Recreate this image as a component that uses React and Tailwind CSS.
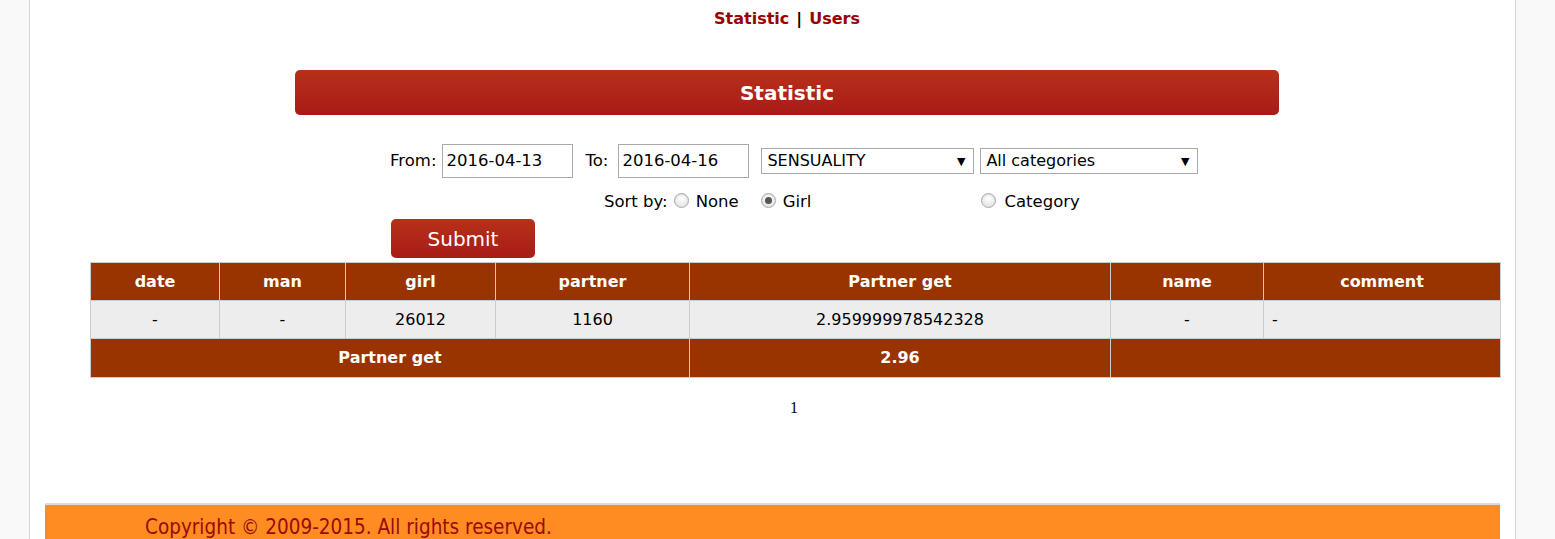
import React from "react";

function Radio({ checked }) {
  return (
    <span className="relative inline-block w-[15px] h-[15px] rounded-full border border-[#a8a8a8] bg-[radial-gradient(circle_at_50%_35%,#ffffff,#dcdcdc)] shadow-[inset_0_1px_1px_rgba(0,0,0,0.08)]">
      {checked && (
        <span className="absolute left-[3px] top-[3px] w-[7px] h-[7px] rounded-full bg-[#555]" />
      )}
    </span>
  );
}

function Select({ width, label }) {
  return (
    <div
      className={`flex items-center justify-between h-[26px] border border-[#a9a9a9] bg-white pl-[5px] pr-[8px] text-[16px] text-black ${width}`}
    >
      <span>{label}</span>
      <span className="text-[11px] leading-none">▼</span>
    </div>
  );
}

export default function App() {
  const cols = ["date", "man", "girl", "partner", "Partner get", "name", "comment"];
  const widths = [129, 126, 150, 194, 421, 153, 237];
  const row = ["-", "-", "26012", "1160", "2.959999978542328", "-", "-"];
  return (
    <div className="flex min-h-[539px] font-['DejaVu_Sans',sans-serif] text-[16px] text-black">
      <div className="w-[29px] bg-[#f9f9f9]" />
      <div className="w-[1487px] border-x border-[#d6d6d6] bg-white flex flex-col">
        {/* nav */}
        <div className="ml-[265px] w-[984px] pt-[9px] text-center font-bold text-[16px] leading-[20px]">
          <span className="text-[#990000]">Statistic</span>
          <span className="mx-[7px]">|</span>
          <span className="text-[#990000]">Users</span>
        </div>
        {/* header bar */}
        <div className="ml-[265px] mt-[41px] w-[984px] h-[45px] rounded-[5px] bg-gradient-to-b from-[#b6301a] to-[#a91a16] flex items-center justify-center text-white font-bold text-[20px]">
          Statistic
        </div>
        {/* form row 1 */}
        <div className="mt-[29px] flex items-center ml-[360px] h-[34px]">
          <span className="text-[16.5px]">From:</span>
          <div className="ml-[6px] w-[131px] h-[34px] border border-[#a9a9a9] flex items-center pl-[3px] text-[16.5px]">
            2016-04-13
          </div>
          <span className="ml-[12px] text-[16.5px]">To:</span>
          <div className="ml-[10px] w-[131px] h-[34px] border border-[#a9a9a9] flex items-center pl-[3px] text-[16.5px]">
            2016-04-16
          </div>
          <div className="ml-[12px]">
            <Select width="w-[213px]" label="SENSUALITY" />
          </div>
          <div className="ml-[6px]">
            <Select width="w-[218px]" label="All categories" />
          </div>
        </div>
        {/* sort row */}
        <div className="mt-[13px] flex items-center h-[22px] ml-[574px] text-[16.5px]">
          <span>Sort by:</span>
          <span className="ml-[6px] -mt-[4px] flex"><Radio /></span>
          <span className="ml-[7px]">None</span>
          <span className="ml-[22px] -mt-[4px] flex"><Radio checked /></span>
          <span className="ml-[7px]">Girl</span>
          <span className="ml-[170px] -mt-[4px] flex"><Radio /></span>
          <span className="ml-[8px]">Category</span>
        </div>
        {/* submit */}
        <div className="mt-[6px] ml-[361px] w-[144px] h-[39px] rounded-[5px] bg-gradient-to-b from-[#b6301a] to-[#a91a16] flex items-center justify-center text-white text-[20px]">
          Submit
        </div>
        {/* table */}
        <table className="mt-[4px] ml-[60px] w-[1410px] border-collapse table-fixed">
          <colgroup>
            {widths.map((w, i) => (
              <col key={i} style={{ width: w }} />
            ))}
          </colgroup>
          <thead>
            <tr className="h-[38px] bg-[#993300] text-white font-bold">
              {cols.map((c) => (
                <th key={c} className="border border-[#cccccc] text-center font-bold">
                  {c}
                </th>
              ))}
            </tr>
          </thead>
          <tbody>
            <tr className="h-[38px] bg-[#ededed]">
              {row.map((c, i) => (
                <td
                  key={i}
                  className={`border border-[#cccccc] ${i === 6 ? "text-left pl-[8px]" : "text-center"}`}
                >
                  {c}
                </td>
              ))}
            </tr>
            <tr className="h-[39px] bg-[#993300] text-white font-bold">
              <td colSpan={4} className="border border-[#cccccc] text-center">
                Partner get
              </td>
              <td className="border border-[#cccccc] text-center">2.96</td>
              <td colSpan={2} className="border border-[#cccccc]" />
            </tr>
          </tbody>
        </table>
        {/* pager */}
        <div className="mt-[20px] ml-[760px] font-['Liberation_Serif',serif] text-[16px] leading-[20px]">
          1
        </div>
        {/* footer */}
        <div className="mt-[85px] ml-[15px] w-[1455px] flex-1 border-t-2 border-[#dcdcdc] bg-[#fe8c22] pl-[100px] pt-[8px] text-[#9b0a0a] text-[20.5px] leading-[28px] font-['DejaVu_Sans_Condensed','DejaVu_Sans',sans-serif]">
          Copyright © 2009-2015. All rights reserved.
        </div>
      </div>
      <div className="flex-1 bg-[#f9f9f9]" />
    </div>
  );
}
